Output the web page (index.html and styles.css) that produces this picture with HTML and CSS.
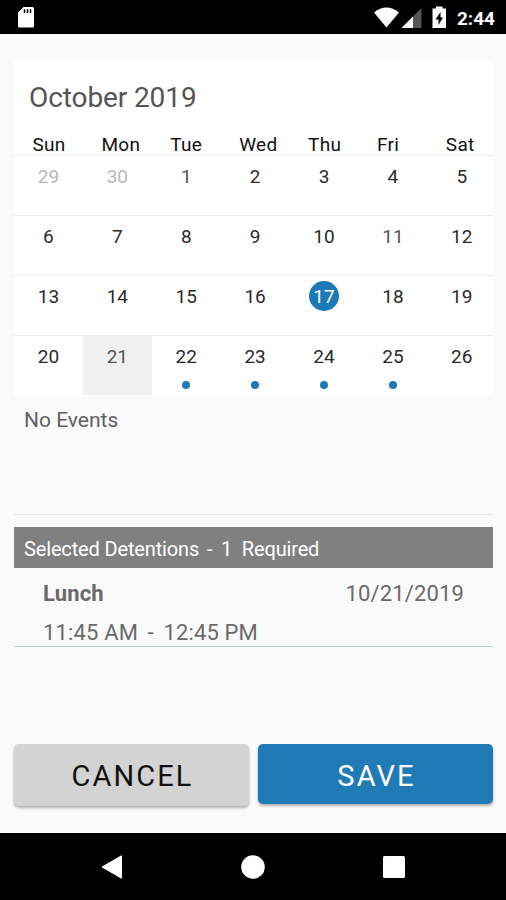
FILE: index.html
```html
<!DOCTYPE html>
<html lang="en">
<head>
<meta charset="utf-8">
<title>Select Detention</title>
<link rel="stylesheet" href="styles.css">
</head>
<body>
<header class="status">
  <svg class="sd" width="16" height="21" viewBox="0 0 16 21"><path fill="#fff" d="M5.5 0H14.5Q16 0 16 1.500V19Q16 20.500 14.500 20.500H1.500Q0 20.500 0 19V5.500Z"/><path stroke="#000" stroke-width="1.500" d="M6.500 2.200v3.800M9.500 2.200v3.800M12.500 2.200v3.800"/></svg>
  <svg class="signals" width="74" height="23" viewBox="0 0 74 23"><path fill="#fff" d="M0 6.500Q12.500-3.500 25 6.500L12.500 21.500Z"/><path fill="#555" d="M47.500 2V22H27.500Z"/><path fill="#fff" d="M39 10.500V22H27.500Z"/><path fill="#fff" d="M58.500 2.500H62V.5H68.500V2.500H72V22H58.500Z"/><path fill="#000" d="M66.500 6L61.500 13.500H64.500V19L69 11.500H66.500Z"/></svg>
  <span class="clock">2:44</span>
</header>
<main class="content">
  <section class="calendar">
    <h1 class="month">October 2019</h1>
    <div class="week names"><span>Sun</span><span>Mon</span><span>Tue</span><span>Wed</span><span>Thu</span><span>Fri</span><span>Sat</span></div>
    <div class="week"><div class="day out"><b>29</b></div><div class="day out"><b>30</b></div><div class="day dim"><b>1</b></div><div class="day"><b>2</b></div><div class="day"><b>3</b></div><div class="day"><b>4</b></div><div class="day"><b>5</b></div></div>
    <div class="week"><div class="day"><b>6</b></div><div class="day"><b>7</b></div><div class="day"><b>8</b></div><div class="day"><b>9</b></div><div class="day"><b>10</b></div><div class="day dim"><b>11</b></div><div class="day"><b>12</b></div></div>
    <div class="week"><div class="day"><b>13</b></div><div class="day"><b>14</b></div><div class="day"><b>15</b></div><div class="day"><b>16</b></div><div class="day today"><b>17</b></div><div class="day"><b>18</b></div><div class="day"><b>19</b></div></div>
    <div class="week"><div class="day"><b>20</b></div><div class="day selected dim"><b>21</b></div><div class="day"><b>22</b><i class="dot"></i></div><div class="day"><b>23</b><i class="dot"></i></div><div class="day"><b>24</b><i class="dot"></i></div><div class="day"><b>25</b><i class="dot"></i></div><div class="day"><b>26</b></div></div>
  </section>
  <section class="events"><span class="none">No Events</span></section>
  <h2 class="banner">Selected Detentions <span class="dash">-</span> 1&nbsp; Required</h2>
  <section class="detention">
    <div class="row"><strong class="name">Lunch</strong><span class="date">10/21/2019</span></div>
    <div class="row"><span class="time">11:45 AM <span class="dash">-</span> 12:45 PM</span></div>
  </section>
  <div class="actions"><button class="btn cancel">CANCEL</button><button class="btn save">SAVE</button></div>
</main>
<nav class="nav">
  <svg width="22" height="24" viewBox="0 0 22 24"><path fill="#fff" stroke="#fff" stroke-linejoin="round" d="M20.500.8V23.200L1 12Z"/></svg>
  <svg width="24" height="24" viewBox="0 0 24 24"><circle cx="12" cy="12" r="11.800" fill="#fff"/></svg>
  <svg width="22" height="22" viewBox="0 0 22 22"><rect width="22" height="22" rx="1.500" fill="#fff"/></svg>
</nav>
</body>
</html>
```

FILE: styles.css
```css
* { box-sizing: border-box; }
body {
  margin: 0;
  width: 506px;
  height: 900px;
  display: flex;
  flex-direction: column;
  background: #fafafa;
  font-family: Roboto, sans-serif;
  color: #616161;
  overflow: hidden;
}
.status {
  height: 34px;
  background: #000;
  color: #fff;
  display: flex;
  align-items: flex-start;
  padding: 7px 11px 0 18px;
}
.signals { margin: -1px 9px 0 auto; }
.clock { font-size: 19px; font-weight: 700; line-height: 23px; }
.content {
  flex: 1;
  display: flex;
  flex-direction: column;
  padding: 27px 13px 0 14px;
}
.calendar { background: #fff; height: 335px; overflow: hidden; }
.month {
  margin: 0;
  height: 70px;
  padding: 0 0 0 15px;
  font-size: 28px;
  font-weight: 400;
  line-height: 73px;
  letter-spacing: -.1px;
  color: #555;
}
.week {
  display: grid;
  grid-template-columns: repeat(7, 68.9px);
  height: 59.9px;
}
.names {
  height: 24.4px;
  padding-left: 18.5px;
  font-size: 19px;
  line-height: 28px;
  letter-spacing: .3px;
  color: #111;
}
.day {
  display: flex;
  flex-direction: column;
  align-items: center;
  border-top: 1px solid #eee;
  padding-top: 5px;
  color: #2a2a2a;
}
.day b {
  width: 30px;
  height: 30px;
  border-radius: 50%;
  text-align: center;
  font-size: 19px;
  font-weight: 400;
  line-height: 31px;
}
.out { color: #b8b8b8; }
.dim { color: #555; }
.today b { background: #1c7ab6; color: #fff; }
.selected { background: #f1f1f1; }
.dot {
  width: 8px;
  height: 8px;
  margin-top: 10px;
  border-radius: 50%;
  background: #1c7ab6;
}
.events {
  height: 119px;
  border-bottom: 1px solid #e8e8e8;
  padding: 8px 10px;
  font-size: 21px;
  line-height: 32px;
}
.banner {
  margin: 12px 0 0;
  height: 41px;
  background: #808080;
  color: #fff;
  padding-left: 10px;
  font-size: 20px;
  font-weight: 400;
  line-height: 44px;
  letter-spacing: -.15px;
  white-space: pre;
}
.banner .dash { margin: 0 4px 0 3px; }
.detention {
  height: 79px;
  border-bottom: 1px solid #b9cbdc;
  padding: 6px 29px 0;
  font-size: 22px;
  letter-spacing: .15px;
  color: #6a6a6a;
}
.time .dash { margin: 0 4px; }
.row { display: flex; justify-content: space-between; height: 39px; line-height: 39px; }
.name { font-weight: 700; }
.actions { display: flex; gap: 9px; margin-top: 97px; }
.btn {
  width: 235px;
  height: 60px;
  border: 0;
  border-radius: 5px;
  padding: 1px 0 0 2px;
  font: 400 29px/62px Roboto, sans-serif;
  letter-spacing: 2.1px;
  box-shadow: 0 2px 3px rgba(0, 0, 0, .3);
}
.cancel { background: #d3d3d3; color: #111; height: 62px; }
.save { background: #1f7ab6; color: #fff; }
.nav {
  height: 67px;
  background: #000;
  display: flex;
  align-items: center;
  justify-content: center;
  gap: 118px;
}
```
